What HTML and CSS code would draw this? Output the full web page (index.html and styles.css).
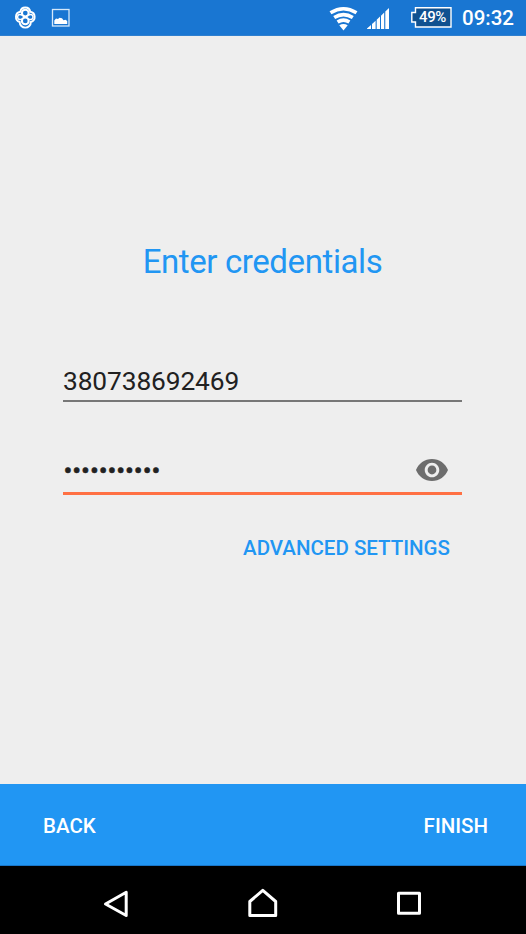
FILE: index.html
```html
<!DOCTYPE html>
<html lang="en">
<head>
<meta charset="utf-8">
<title>Enter credentials</title>
<link rel="stylesheet" href="styles.css">
</head>
<body>
<div class="screen">
  <header class="status">
    <svg class="sync" width="24" height="24" viewBox="0 0 24 24" fill="none" stroke="#fff">
      <path stroke-width="1.9" d="M7.300 6.800A5.050 5.050 0 0 1 17.300 6.800A5.250 5.250 0 0 1 17.900 17A5.600 5.600 0 0 1 6.700 17A5.250 5.250 0 0 1 7.300 6.800Z"/>
      <g stroke-width="2.100"><circle cx="12.3" cy="8.100" r="3.400"/><circle cx="12.3" cy="15.900" r="3.400"/></g>
      <path stroke-width="1.500" d="M9.300 10.200Q6.300 8.700 5 10.500Q4.100 12 5 13.500Q6.300 15.300 9.300 13.800M15.300 10.200Q18.300 8.700 19.600 10.500Q20.500 12 19.600 13.500Q18.300 15.300 15.300 13.800"/>
    </svg>
    <svg class="photo" width="18" height="18" viewBox="0 0 18 18">
      <rect x=".5" y=".5" width="16.500" height="16.500" fill="none" stroke="#d5e8fa" stroke-width="1.300"/>
      <path d="M2.300 15V11.500L4 9.500L6 10L7.500 8.700L10 9.200L11.500 11.200L13.500 10.700L15.200 12V15Z" fill="#fff"/>
    </svg>
    <span class="spacer"></span>
    <svg class="wifi" width="30" height="24" viewBox="0 0 30 24" fill="none" stroke="#fff">
      <g stroke-width="3.600">
        <path d="M1.500 5.700Q14.500-2.200 27.500 5.700"/>
        <path d="M5.200 10.500Q14.500 4.700 23.800 10.500"/>
        <path d="M8.600 15Q14.500 11.200 20.400 15"/>
      </g>
      <path d="M10.300 18.200Q14.500 15.800 18.700 18.200L14.500 23.400Z" fill="#fff" stroke="none"/>
    </svg>
    <svg class="signal" width="23" height="22" viewBox="0 0 23 22" fill="#fff">
      <path d="M0 21V20.500L4 17V21ZM5 21V16L8.600 12.800V21ZM9.700 21V11.800L13 8.600V21ZM14 21V7.700L17.200 4.500V21ZM18.300 21V3.400L22 0V21Z"/>
    </svg>
    <div class="battery">
      <svg width="41" height="21" viewBox="0 0 41 21"><path d="M4.500.7H40V20H4.500V15H.8V5.500H4.500Z" fill="#105190" stroke="#fff" stroke-width="1.4"/></svg>
      <span class="level">49%</span>
    </div>
    <span class="time">09:32</span>
  </header>

  <main class="content">
    <h1 class="title">Enter credentials</h1>
    <div class="field">380738692469</div>
    <div class="field password">
      <span class="dots">•••••••••••</span>
      <svg class="eye" width="32" height="22" viewBox="1 4.5 22 15" preserveAspectRatio="none" fill="#6d6d6d"><path d="M12 4.500C7 4.500 2.730 7.610 1 12c1.730 4.390 6 7.500 11 7.500s9.270-3.110 11-7.500c-1.730-4.390-6-7.500-11-7.500zM12 17c-2.760 0-5-2.240-5-5s2.240-5 5-5 5 2.240 5 5-2.240 5-5 5zm0-8c-1.660 0-3 1.340-3 3s1.340 3 3 3 3-1.340 3-3-1.340-3-3-3z"/></svg>
    </div>
    <div class="advanced">ADVANCED SETTINGS</div>
  </main>

  <footer class="actions"><span class="back">BACK</span><span class="finish">FINISH</span></footer>

  <nav class="nav">
    <svg width="30" height="30" viewBox="0 0 30 30"><path d="M25.200 2.300V25.500L4.500 14Z"/></svg>
    <svg width="30" height="30" viewBox="0 0 30 30"><path d="M1.800 25.500V11.500L14.800 .3L27.700 11.500V25.500Z"/></svg>
    <svg width="30" height="30" viewBox="0 0 30 30"><path d="M4.500 3.300H25.500V23.300H4.500Z"/></svg>
  </nav>
</div>
</body>
</html>
```
FILE: styles.css
```css
* { box-sizing: border-box; }
body { margin: 0; font-family: Roboto, sans-serif; background: #eee; }
svg { display: block; flex: none; overflow: visible; }
.screen { width: 526px; height: 934px; display: flex; flex-direction: column; overflow: hidden; }

.status { height: 36px; flex: none; background: #1976d2; border-bottom: 1px solid #2e7fcf; display: flex; align-items: flex-start; color: #fff; }
.sync { margin: 5px 0 0 13px; }
.photo { margin: 8.500px 0 0 15px; }
.spacer { flex: 1; }
.wifi { margin: 7px 8px 0 0; }
.signal { margin: 8px 21px 0 0; }
.battery { position: relative; width: 41px; margin: 7px 10px 0 0; }
.level { position: absolute; left: 8px; top: 0; font-size: 15px; font-weight: 500; line-height: 21px; letter-spacing: -.4px; }
.time { width: 64px; font-size: 20.5px; font-weight: 500; line-height: 37px; }

.content { flex: 1; padding: 0 64px 0 63px; }
.title { margin: 205px 0 0; text-align: center; color: #2196f3; font-size: 33px; font-weight: 400; line-height: 41px; letter-spacing: -.4px; }
.field { margin-top: 80px; height: 40px; border-bottom: 2px solid #777; color: #212121; font-size: 26.3px; line-height: 38px; letter-spacing: -.1px; }
.password { margin-top: 50px; height: 43px; border-bottom: 3px solid #ff7043; display: flex; justify-content: space-between; line-height: 38px; }
.dots { padding-left: .5px; letter-spacing: -.08px; -webkit-text-stroke: .5px #212121; }
.eye { margin: 7px 14px 0 0; }
.advanced { margin-top: 38px; padding-right: 12px; text-align: right; color: #2196f3; font-size: 20.5px; font-weight: 500; line-height: 30px; }

.actions { flex: none; height: 82px; padding: 0 38px 0 43px; background: #2196f3; border-bottom: 1px solid #1976c8; display: flex; justify-content: space-between; color: #fff; font-size: 20.5px; font-weight: 500; line-height: 84px; }
.nav { flex: none; height: 68px; padding: 23px 102px 0 101px; background: #000; display: flex; justify-content: space-between; }
.nav svg { margin-top: 1px; }
.nav path { fill: none; stroke: #fff; stroke-width: 3; stroke-linejoin: round; }
```
